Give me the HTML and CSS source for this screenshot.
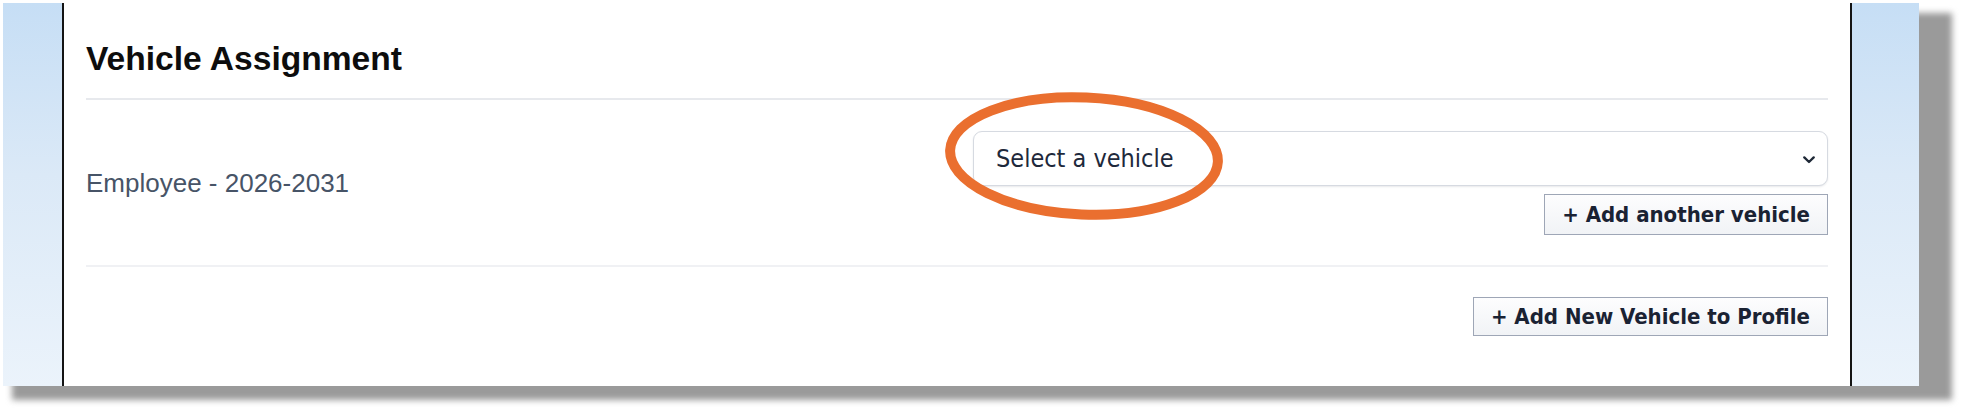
FILE: index.html
```html
<!DOCTYPE html>
<html lang="en">
<head>
<meta charset="utf-8">
<title>Vehicle Assignment</title>
<link rel="stylesheet" href="styles.css">
</head>
<body>
<div class="frame">
  <div class="side side-left"></div>
  <main class="main">
    <div class="section-head">
      <h2 class="title">Vehicle Assignment</h2>
    </div>
    <div class="assign-row">
      <div class="label">Employee - 2026-2031</div>
      <div class="controls">
        <div class="select">
          <span class="select-text">Select a vehicle</span>
          <svg class="chevron" width="12" height="8" viewBox="0 0 12 8" aria-hidden="true">
            <polyline points="1.3,1.4 6,6 10.7,1.4" fill="none" stroke="#1f2937" stroke-width="2.3" stroke-linecap="round" stroke-linejoin="round"/>
          </svg>
          <svg class="highlight" width="300" height="150" viewBox="0 0 300 150" aria-hidden="true">
            <ellipse cx="147" cy="72" rx="134" ry="58.5" transform="rotate(2.5 147 72)" fill="none" stroke="#ea6f2f" stroke-width="10"/>
          </svg>
        </div>
        <button class="btn btn-small" type="button">+ Add another vehicle</button>
      </div>
    </div>
    <div class="footer">
      <button class="btn" type="button">+ Add New Vehicle to Profile</button>
    </div>
  </main>
  <div class="side side-right"></div>
</div>
</body>
</html>
```

FILE: styles.css
```css
html {
  background: #ffffff;
}

body {
  margin: 0;
  padding: 3px 0 0 3px;
  min-height: 409px;
}

.frame {
  position: relative;
  isolation: isolate;
  display: flex;
  width: 1916px;
  height: 383px;
}

.frame::before {
  content: "";
  position: absolute;
  top: 10px;
  left: 9px;
  right: -33px;
  bottom: -14px;
  background: #9a9a9a;
  filter: blur(3px);
  z-index: -1;
}

.side {
  background: linear-gradient(180deg, #c6def5 0%, #dbe9f7 45%, #ebf3fb 100%);
}

.side-left {
  width: 59px;
}

.side-right {
  width: 67px;
}

.main {
  flex: 1;
  background: #ffffff;
  border-left: 2px solid #141414;
  border-right: 2px solid #141414;
  padding: 37px 22px 0 22px;
}

.section-head {
  padding-bottom: 20px;
  border-bottom: 2px solid #e7e9ed;
}

.title {
  margin: 0;
  font-family: "Liberation Sans", Arial, sans-serif;
  font-weight: 700;
  font-size: 33.6px;
  line-height: 38px;
  color: #0d0d0d;
}

.assign-row {
  display: grid;
  grid-template-columns: 1fr 855px;
  align-items: center;
  padding: 31px 0 30px 0;
  border-bottom: 2px solid #f0f1f4;
}

.label {
  font-family: "Liberation Sans", Arial, sans-serif;
  font-size: 26px;
  line-height: 30px;
  color: #475467;
}

.controls {
  display: flex;
  flex-direction: column;
  align-items: flex-end;
}

.select {
  position: relative;
  box-sizing: border-box;
  width: 100%;
  height: 55px;
  display: flex;
  align-items: center;
  justify-content: space-between;
  padding: 0 12px 0 22px;
  border: 1px solid #d6dae1;
  border-radius: 9px;
  background: #ffffff;
  box-shadow: 0 1px 2px rgba(30, 41, 59, 0.10);
}

.select-text {
  font-family: "DejaVu Sans Condensed", "DejaVu Sans", sans-serif;
  font-stretch: condensed;
  font-size: 25px;
  color: #1e293b;
}

.chevron {
  display: block;
  margin-top: 2px;
}

.highlight {
  position: absolute;
  left: -37px;
  top: -48px;
  overflow: visible;
  pointer-events: none;
}

.btn {
  box-sizing: border-box;
  height: 39px;
  padding: 0 17px;
  border: 1px solid #9ea6b6;
  border-radius: 0;
  background: linear-gradient(180deg, #fdfdfe 0%, #f1f3f6 100%);
  font-family: "DejaVu Sans Condensed", "DejaVu Sans", sans-serif;
  font-stretch: condensed;
  font-weight: 700;
  font-size: 22px;
  color: #1a2233;
  cursor: pointer;
}

.btn-small {
  height: 41px;
  margin-top: 8px;
}

.footer {
  display: flex;
  justify-content: flex-end;
  padding-top: 30px;
}
```
